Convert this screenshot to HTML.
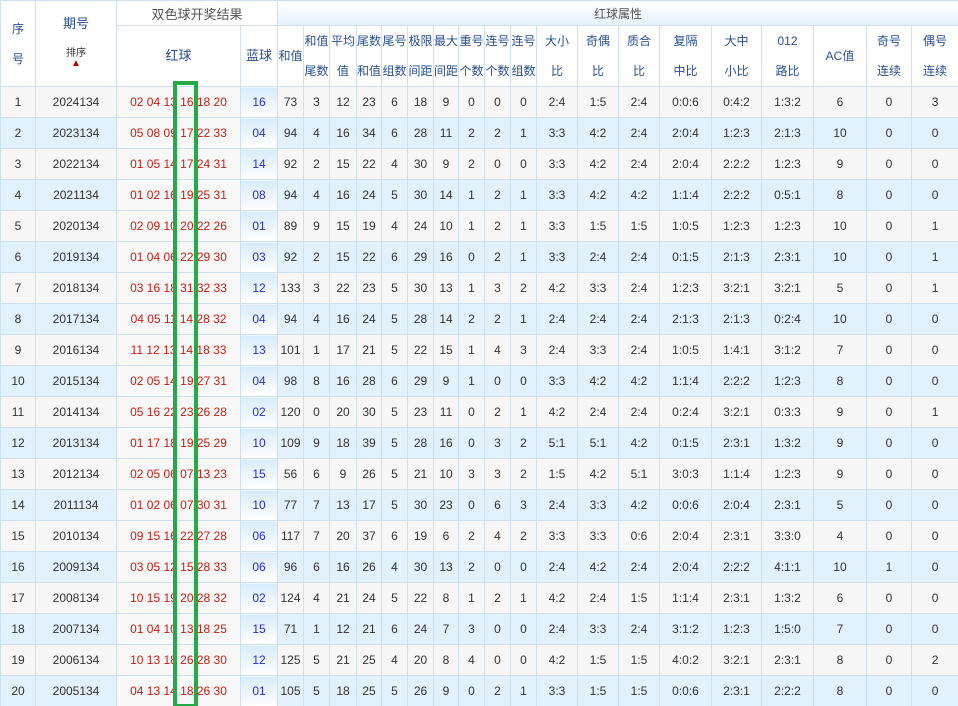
<!DOCTYPE html>
<html><head><meta charset="utf-8"><style>
body{margin:0;background:#fff;}
table{border-collapse:collapse;table-layout:fixed;width:958px;font-family:"Liberation Sans","Noto Sans CJK SC",sans-serif;font-size:12px;color:#333;}
td,th{border:1px solid #cfe1f1;text-align:center;padding:0;white-space:nowrap;overflow:hidden;font-weight:normal;}
th{color:#2a4f8f;font-size:12px;background:#fff;}
thead tr.h1 th{height:24px;background:linear-gradient(#fff,#e4f1fc);}
thead tr.h2 th{height:60px;line-height:30px;}
thead tr.h1 th.top{background:#fff;}
tbody td{height:30px;}
tbody tr:nth-child(odd) td{background:#f7f7f7;}
tbody tr:nth-child(even) td{background:#e2f1fc;}
tbody td.r{background:#f8f8f8!important;color:#c41e12;letter-spacing:0;}
tbody td.b{background:linear-gradient(#d8ecfb,#fff)!important;color:#2b2bd9;}
.box{position:absolute;left:173px;top:81px;width:17px;height:619px;border:4px solid #23ab47;}
.ar{color:#b00;font-size:10px;line-height:10px;display:block;}
</style></head><body>
<div style="position:relative;width:958px;height:706px;overflow:hidden">
<table>
<colgroup><col style="width:35px"><col style="width:81px"><col style="width:124px"><col style="width:37px"><col style="width:26px"><col style="width:26px"><col style="width:27px"><col style="width:25px"><col style="width:26px"><col style="width:26px"><col style="width:25px"><col style="width:26px"><col style="width:26px"><col style="width:26px"><col style="width:41px"><col style="width:41px"><col style="width:41px"><col style="width:52px"><col style="width:50px"><col style="width:52px"><col style="width:53px"><col style="width:45px"><col style="width:47px"></colgroup>
<thead>
<tr class="h1"><th rowspan="2" class="top" style="line-height:30px">序<br>号</th><th rowspan="2" class="top" style="background:#fff"><div style="font-size:13px;margin-top:-6px">期号</div><div style="font-size:10px;margin-top:12px;color:#333">排序</div><span class="ar">▲</span></th><th colspan="2" class="top" style="color:#555;font-size:13px">双色球开奖结果</th><th colspan="19" style="color:#555">红球属性</th></tr>
<tr class="h2"><th style="font-size:13px">红球</th><th style="font-size:13px">蓝球</th><th>和值</th><th>和值<br>尾数</th><th>平均<br>值</th><th>尾数<br>和值</th><th>尾号<br>组数</th><th>极限<br>间距</th><th>最大<br>间距</th><th>重号<br>个数</th><th>连号<br>个数</th><th>连号<br>组数</th><th>大小<br>比</th><th>奇偶<br>比</th><th>质合<br>比</th><th>复隔<br>中比</th><th>大中<br>小比</th><th>012<br>路比</th><th>AC值</th><th>奇号<br>连续</th><th>偶号<br>连续</th></tr>
</thead>
<tbody>
<tr><td>1</td><td>2024134</td><td class="r">02 04 13 16 18 20</td><td class="b">16</td><td>73</td><td>3</td><td>12</td><td>23</td><td>6</td><td>18</td><td>9</td><td>0</td><td>0</td><td>0</td><td>2:4</td><td>1:5</td><td>2:4</td><td>0:0:6</td><td>0:4:2</td><td>1:3:2</td><td>6</td><td>0</td><td>3</td></tr>
<tr><td>2</td><td>2023134</td><td class="r">05 08 09 17 22 33</td><td class="b">04</td><td>94</td><td>4</td><td>16</td><td>34</td><td>6</td><td>28</td><td>11</td><td>2</td><td>2</td><td>1</td><td>3:3</td><td>4:2</td><td>2:4</td><td>2:0:4</td><td>1:2:3</td><td>2:1:3</td><td>10</td><td>0</td><td>0</td></tr>
<tr><td>3</td><td>2022134</td><td class="r">01 05 14 17 24 31</td><td class="b">14</td><td>92</td><td>2</td><td>15</td><td>22</td><td>4</td><td>30</td><td>9</td><td>2</td><td>0</td><td>0</td><td>3:3</td><td>4:2</td><td>2:4</td><td>2:0:4</td><td>2:2:2</td><td>1:2:3</td><td>9</td><td>0</td><td>0</td></tr>
<tr><td>4</td><td>2021134</td><td class="r">01 02 16 19 25 31</td><td class="b">08</td><td>94</td><td>4</td><td>16</td><td>24</td><td>5</td><td>30</td><td>14</td><td>1</td><td>2</td><td>1</td><td>3:3</td><td>4:2</td><td>4:2</td><td>1:1:4</td><td>2:2:2</td><td>0:5:1</td><td>8</td><td>0</td><td>0</td></tr>
<tr><td>5</td><td>2020134</td><td class="r">02 09 10 20 22 26</td><td class="b">01</td><td>89</td><td>9</td><td>15</td><td>19</td><td>4</td><td>24</td><td>10</td><td>1</td><td>2</td><td>1</td><td>3:3</td><td>1:5</td><td>1:5</td><td>1:0:5</td><td>1:2:3</td><td>1:2:3</td><td>10</td><td>0</td><td>1</td></tr>
<tr><td>6</td><td>2019134</td><td class="r">01 04 06 22 29 30</td><td class="b">03</td><td>92</td><td>2</td><td>15</td><td>22</td><td>6</td><td>29</td><td>16</td><td>0</td><td>2</td><td>1</td><td>3:3</td><td>2:4</td><td>2:4</td><td>0:1:5</td><td>2:1:3</td><td>2:3:1</td><td>10</td><td>0</td><td>1</td></tr>
<tr><td>7</td><td>2018134</td><td class="r">03 16 18 31 32 33</td><td class="b">12</td><td>133</td><td>3</td><td>22</td><td>23</td><td>5</td><td>30</td><td>13</td><td>1</td><td>3</td><td>2</td><td>4:2</td><td>3:3</td><td>2:4</td><td>1:2:3</td><td>3:2:1</td><td>3:2:1</td><td>5</td><td>0</td><td>1</td></tr>
<tr><td>8</td><td>2017134</td><td class="r">04 05 11 14 28 32</td><td class="b">04</td><td>94</td><td>4</td><td>16</td><td>24</td><td>5</td><td>28</td><td>14</td><td>2</td><td>2</td><td>1</td><td>2:4</td><td>2:4</td><td>2:4</td><td>2:1:3</td><td>2:1:3</td><td>0:2:4</td><td>10</td><td>0</td><td>0</td></tr>
<tr><td>9</td><td>2016134</td><td class="r">11 12 13 14 18 33</td><td class="b">13</td><td>101</td><td>1</td><td>17</td><td>21</td><td>5</td><td>22</td><td>15</td><td>1</td><td>4</td><td>3</td><td>2:4</td><td>3:3</td><td>2:4</td><td>1:0:5</td><td>1:4:1</td><td>3:1:2</td><td>7</td><td>0</td><td>0</td></tr>
<tr><td>10</td><td>2015134</td><td class="r">02 05 14 19 27 31</td><td class="b">04</td><td>98</td><td>8</td><td>16</td><td>28</td><td>6</td><td>29</td><td>9</td><td>1</td><td>0</td><td>0</td><td>3:3</td><td>4:2</td><td>4:2</td><td>1:1:4</td><td>2:2:2</td><td>1:2:3</td><td>8</td><td>0</td><td>0</td></tr>
<tr><td>11</td><td>2014134</td><td class="r">05 16 22 23 26 28</td><td class="b">02</td><td>120</td><td>0</td><td>20</td><td>30</td><td>5</td><td>23</td><td>11</td><td>0</td><td>2</td><td>1</td><td>4:2</td><td>2:4</td><td>2:4</td><td>0:2:4</td><td>3:2:1</td><td>0:3:3</td><td>9</td><td>0</td><td>1</td></tr>
<tr><td>12</td><td>2013134</td><td class="r">01 17 18 19 25 29</td><td class="b">10</td><td>109</td><td>9</td><td>18</td><td>39</td><td>5</td><td>28</td><td>16</td><td>0</td><td>3</td><td>2</td><td>5:1</td><td>5:1</td><td>4:2</td><td>0:1:5</td><td>2:3:1</td><td>1:3:2</td><td>9</td><td>0</td><td>0</td></tr>
<tr><td>13</td><td>2012134</td><td class="r">02 05 06 07 13 23</td><td class="b">15</td><td>56</td><td>6</td><td>9</td><td>26</td><td>5</td><td>21</td><td>10</td><td>3</td><td>3</td><td>2</td><td>1:5</td><td>4:2</td><td>5:1</td><td>3:0:3</td><td>1:1:4</td><td>1:2:3</td><td>9</td><td>0</td><td>0</td></tr>
<tr><td>14</td><td>2011134</td><td class="r">01 02 06 07 30 31</td><td class="b">10</td><td>77</td><td>7</td><td>13</td><td>17</td><td>5</td><td>30</td><td>23</td><td>0</td><td>6</td><td>3</td><td>2:4</td><td>3:3</td><td>4:2</td><td>0:0:6</td><td>2:0:4</td><td>2:3:1</td><td>5</td><td>0</td><td>0</td></tr>
<tr><td>15</td><td>2010134</td><td class="r">09 15 16 22 27 28</td><td class="b">06</td><td>117</td><td>7</td><td>20</td><td>37</td><td>6</td><td>19</td><td>6</td><td>2</td><td>4</td><td>2</td><td>3:3</td><td>3:3</td><td>0:6</td><td>2:0:4</td><td>2:3:1</td><td>3:3:0</td><td>4</td><td>0</td><td>0</td></tr>
<tr><td>16</td><td>2009134</td><td class="r">03 05 12 15 28 33</td><td class="b">06</td><td>96</td><td>6</td><td>16</td><td>26</td><td>4</td><td>30</td><td>13</td><td>2</td><td>0</td><td>0</td><td>2:4</td><td>4:2</td><td>2:4</td><td>2:0:4</td><td>2:2:2</td><td>4:1:1</td><td>10</td><td>1</td><td>0</td></tr>
<tr><td>17</td><td>2008134</td><td class="r">10 15 19 20 28 32</td><td class="b">02</td><td>124</td><td>4</td><td>21</td><td>24</td><td>5</td><td>22</td><td>8</td><td>1</td><td>2</td><td>1</td><td>4:2</td><td>2:4</td><td>1:5</td><td>1:1:4</td><td>2:3:1</td><td>1:3:2</td><td>6</td><td>0</td><td>0</td></tr>
<tr><td>18</td><td>2007134</td><td class="r">01 04 10 13 18 25</td><td class="b">15</td><td>71</td><td>1</td><td>12</td><td>21</td><td>6</td><td>24</td><td>7</td><td>3</td><td>0</td><td>0</td><td>2:4</td><td>3:3</td><td>2:4</td><td>3:1:2</td><td>1:2:3</td><td>1:5:0</td><td>7</td><td>0</td><td>0</td></tr>
<tr><td>19</td><td>2006134</td><td class="r">10 13 18 26 28 30</td><td class="b">12</td><td>125</td><td>5</td><td>21</td><td>25</td><td>4</td><td>20</td><td>8</td><td>4</td><td>0</td><td>0</td><td>4:2</td><td>1:5</td><td>1:5</td><td>4:0:2</td><td>3:2:1</td><td>2:3:1</td><td>8</td><td>0</td><td>2</td></tr>
<tr><td>20</td><td>2005134</td><td class="r">04 13 14 18 26 30</td><td class="b">01</td><td>105</td><td>5</td><td>18</td><td>25</td><td>5</td><td>26</td><td>9</td><td>0</td><td>2</td><td>1</td><td>3:3</td><td>1:5</td><td>1:5</td><td>0:0:6</td><td>2:3:1</td><td>2:2:2</td><td>8</td><td>0</td><td>0</td></tr>
</tbody></table>
<div class="box"></div>
</div>
</body></html>
